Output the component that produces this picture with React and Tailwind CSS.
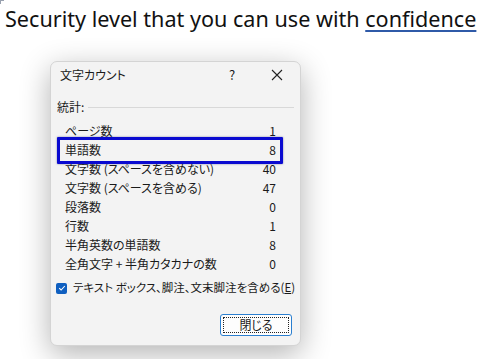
import React from "react";

const rows = [
  ["ページ数", "1"],
  ["単語数", "8"],
  ["文字数 (スペースを含めない)", "40"],
  ["文字数 (スペースを含める)", "47"],
  ["段落数", "0"],
  ["行数", "1"],
  ["半角英数の単語数", "8"],
  ["全角文字 + 半角カタカナの数", "0"],
];

export default function App() {
  return (
    <div className="w-[498px] h-[359px] bg-white overflow-hidden relative">
      <div className="absolute left-0 top-0 w-[4px] h-[4px] border-l border-t border-gray-400"></div>
      <div
        className="pl-[5px] pt-[4px] h-[61px] text-[21.6px] leading-[30px] text-[#111] whitespace-nowrap"
        style={{ fontFamily: '"Noto Sans", "Open Sans", sans-serif' }}
      >
        Security level that you can use with{" "}
        <span className="underline decoration-[#2f5aa8] decoration-[2px] underline-offset-[3px]">confidence</span>
      </div>
      <div
        className="ml-[50px] w-[251px] h-[285px] bg-[#f3f3f3] rounded-[7px] border border-[#d4d4d4] shadow-[0_8px_30px_rgba(0,0,0,0.3)] relative text-[12px] text-[#1a1a1a] flex flex-col [font-feature-settings:'palt']"
        style={{ fontFamily: '"Noto Sans CJK JP", "Noto Sans", sans-serif' }}
      >
        <div className="h-[26px] flex items-center pl-[9px] shrink-0">
          <span className="flex-1 text-[12px]">文字カウント</span>
          <span className="w-[20px] text-center mr-[29px] text-[13px]">?</span>
          <svg width="12" height="12" viewBox="0 0 12 12" className="mr-[17px]">
            <path d="M1 1L11 11M11 1L1 11" stroke="#222" strokeWidth="1.1" />
          </svg>
        </div>
        <div className="flex items-center pl-[6px] pr-[6px] h-[20px] mt-[9px] shrink-0">
          <span>統計:</span>
          <div className="flex-1 ml-[4px] h-px bg-[#d8d8d8]"></div>
        </div>
        <div className="mt-[4px] flex flex-col pl-[14px] pr-[24px] shrink-0">
          {rows.map(([label, value]) => (
            <div key={label} className="h-[19px] flex items-center justify-between shrink-0">
              <span>{label}</span>
              <span>{value}</span>
            </div>
          ))}
        </div>
        <div className="flex items-center pl-[5px] mt-[7px] h-[16px] shrink-0 whitespace-nowrap">
          <div className="w-[11px] h-[11px] rounded-[2px] bg-[#0f5fc0] flex items-center justify-center shrink-0">
            <svg width="8" height="8" viewBox="0 0 8 8">
              <path d="M1.2 4.2L3.1 6L6.8 2" stroke="white" strokeWidth="1.1" fill="none" />
            </svg>
          </div>
          <span className="ml-[6px] text-[11.5px]">
            テキスト ボックス、脚注、文末脚注を含める(<span className="underline">E</span>)
          </span>
        </div>
        <div className="flex justify-end pr-[8px] mt-[18px] shrink-0">
          <div className="w-[72px] h-[22px] rounded-[3px] border border-[#2a7fd0] bg-[#fdfdfd] p-[2px]">
            <div className="w-full h-full border border-dotted border-[#222] flex items-center justify-center">
              閉じる
            </div>
          </div>
        </div>
        <div className="absolute left-[6px] top-[75px] w-[226px] h-[27px] border-[3px] border-[#0a0ad0] rounded-[1px] shadow-[0_0_2px_rgba(0,0,80,0.5)]"></div>
      </div>
    </div>
  );
}
